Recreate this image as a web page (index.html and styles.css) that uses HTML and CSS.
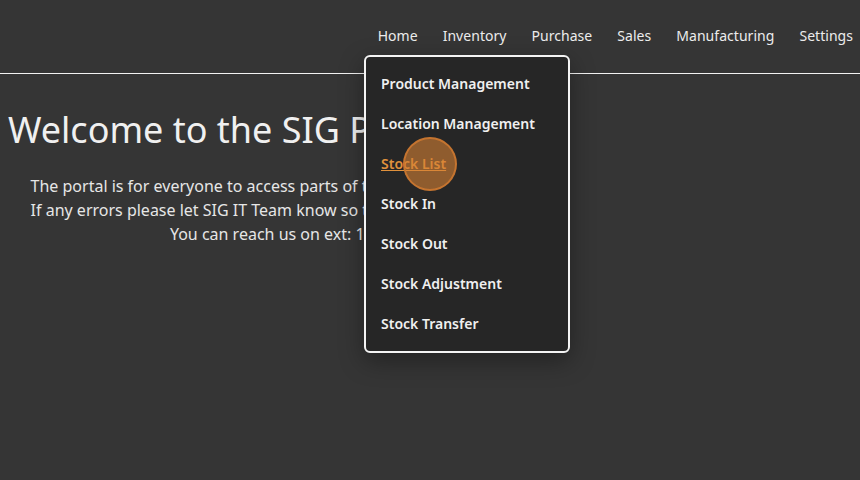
FILE: index.html
```html
<!DOCTYPE html>
<html lang="en">
<head>
<meta charset="utf-8">
<title>SIG Portal</title>
<link rel="stylesheet" href="styles.css">
</head>
<body>
<header class="topbar">
  <nav class="nav">
    <a class="nav-link" href="#">Home</a>
    <a class="nav-link" href="#">Inventory</a>
    <a class="nav-link" href="#">Purchase</a>
    <a class="nav-link" href="#">Sales</a>
    <a class="nav-link" href="#">Manufacturing</a>
    <a class="nav-link" href="#">Settings</a>
  </nav>
  <ul class="dropdown">
    <li class="dd-item"><a href="#">Product Management</a></li>
    <li class="dd-item"><a href="#">Location Management</a></li>
    <li class="dd-item active"><a href="#">Stock List</a><span class="click-ring"></span></li>
    <li class="dd-item"><a href="#">Stock In</a></li>
    <li class="dd-item"><a href="#">Stock Out</a></li>
    <li class="dd-item"><a href="#">Stock Adjustment</a></li>
    <li class="dd-item"><a href="#">Stock Transfer</a></li>
  </ul>
</header>
<main class="content">
  <h1 class="title">Welcome to the SIG Portal</h1>
  <p class="intro">The portal is for everyone to access parts of the SIG systems easily.<br>If any errors please let SIG IT Team know so they can fix it speedily.<br>You can reach us on ext: 1234</p>
</main>
</body>
</html>
```

FILE: styles.css
```css
html, body {
  margin: 0;
  padding: 0;
  background: #353535;
  color: #eeeeee;
  font-family: "Noto Sans", "Open Sans", sans-serif;
}

body {
  min-height: 480px;
}

.topbar {
  position: relative;
  height: 73px;
  border-bottom: 1px solid #f2f2f2;
  display: flex;
  justify-content: flex-end;
}

.nav {
  display: flex;
  align-items: center;
  height: 71px;
  padding-right: 7px;
  gap: 25px;
}

.nav-link {
  color: #ececec;
  text-decoration: none;
  font-size: 14px;
  line-height: 20px;
  letter-spacing: 0.04px;
}

.dropdown {
  position: absolute;
  left: 364px;
  top: 55px;
  width: 172px;
  margin: 0;
  padding: 7px 15px;
  list-style: none;
  background: #262626;
  border: 2px solid #f4f4f4;
  border-radius: 6px;
  box-shadow: 0 8px 24px rgba(0, 0, 0, 0.35);
  z-index: 5;
}

.dd-item {
  position: relative;
  height: 40px;
  display: flex;
  align-items: center;
}

.dd-item a {
  color: #f0f0f0;
  text-decoration: none;
  font-weight: 600;
  font-size: 14px;
  line-height: 20px;
}

.dd-item.active a {
  color: #e0913c;
  text-decoration: underline;
}

.click-ring {
  position: absolute;
  left: 22px;
  top: -7px;
  width: 50px;
  height: 50px;
  border-radius: 50%;
  background: rgba(214, 128, 52, 0.6);
  border: 2px solid rgba(200, 118, 48, 0.95);
}

.content {
  padding: 0 8px;
}

.title {
  margin: 31px 0 0;
  font-size: 36px;
  font-weight: 400;
  line-height: 49px;
  color: #f0f0f0;
}

.intro {
  width: 546px;
  margin: 20px 0 0;
  text-align: center;
  font-size: 16px;
  line-height: 24px;
  color: #e6e6e6;
}
```
